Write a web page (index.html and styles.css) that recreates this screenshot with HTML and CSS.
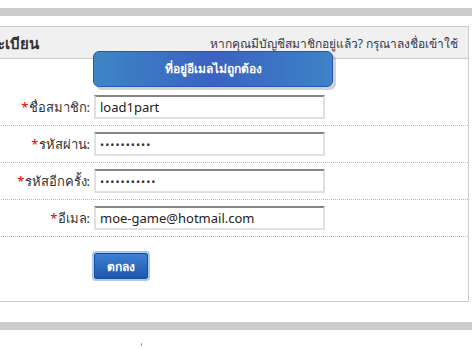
FILE: index.html
```html
<!doctype html>
<html lang="th">
<head>
<meta charset="UTF-8">
<title>ลงทะเบียน</title>
<link rel="stylesheet" href="styles.css">
</head>
<body>
<div class="topbar"></div>

<div class="panel">
  <div class="panel-head">
    <h2>ลงทะเบียน</h2>
    <a class="login-link" href="#">หากคุณมีบัญชีสมาชิกอยู่แล้ว? กรุณาลงชื่อเข้าใช้</a>
  </div>

  <div class="tip">ที่อยู่อีเมลไม่ถูกต้อง</div>

  <form class="reg">
    <div class="row first">
      <label for="user"><span class="req">*</span>ชื่อสมาชิก:</label>
      <input type="text" id="user" value="load1part">
    </div>
    <div class="row">
      <label for="pass"><span class="req">*</span>รหัสผ่าน:</label>
      <input type="password" id="pass" value="1234567890">
    </div>
    <div class="row">
      <label for="pass2"><span class="req">*</span>รหัสอีกครั้ง:</label>
      <input type="password" id="pass2" value="12345678901">
    </div>
    <div class="row">
      <label for="mail"><span class="req">*</span>อีเมล:</label>
      <input type="text" id="mail" value="moe-game@hotmail.com">
    </div>
    <div class="actions">
      <button type="submit">ตกลง</button>
    </div>
  </form>
</div>

<div class="bottombar"></div>
<div class="foot"><span class="mark"></span></div>
</body>
</html>
```

FILE: styles.css
```css
body {
    margin: 0;
    background: #fff;
    font-family: Tahoma, "Noto Sans", "DejaVu Sans", sans-serif;
    font-size: 13px;
    color: #333;
    overflow: hidden;
}
.topbar, .bottombar {
    height: 8px;
    background: #cccccc;
}
.topbar {
    margin-top: 8px;
}
.panel {
    position: relative;
    margin: 10px 3px 20px -40px;
    border: 1px solid #cccccc;
}
.panel-head {
    display: flex;
    justify-content: space-between;
    align-items: center;
    height: 32px;
    padding: 2px 10px 0 10px;
    box-sizing: border-box;
    background: #f0f0f0;
    border-bottom: 1px solid #cccccc;
}
.panel-head h2 {
    margin: 0;
    font-size: 15px;
    font-weight: bold;
    color: #333;
}
.login-link {
    color: #363a4c;
    text-decoration: none;
    font-size: 12px;
}
.tip {
    position: absolute;
    left: 132px;
    top: 24px;
    width: 238px;
    height: 34px;
    line-height: 34px;
    text-align: center;
    color: #fff;
    font-size: 12px;
    font-weight: bold;
    border: 1px solid #2558b4;
    border-radius: 6px;
    background: linear-gradient(to right, #3d86c6, #3b62c2 50%, #3d82c6);
    box-shadow: 3px 3px 0 rgba(0, 0, 0, 0.18);
}
.row {
    display: flex;
    align-items: center;
    gap: 4px;
    padding: 6px 0;
    border-bottom: 1px dotted #b8b8b8;
}
.row.first {
    padding-top: 36px;
}
.row label {
    width: 129px;
    text-align: right;
    color: #333;
}
.req {
    color: #e00000;
}
.row input {
    box-sizing: border-box;
    width: 231px;
    height: 24px;
    padding: 0 4px;
    border: 2px solid #e0e0e0;
    border-top-color: #858585;
    font-family: inherit;
    font-size: 13px;
    color: #222;
    outline: none;
}
.row input[type="password"] {
    font-size: 11px;
    letter-spacing: 1px;
    color: #333;
}
.actions {
    padding: 16px 0 22px 133px;
}
.actions button {
    width: 54px;
    height: 26px;
    border: 1px solid #1b4d9a;
    border-radius: 2px;
    background: linear-gradient(#3d7fd4, #1e58ad);
    box-shadow: 0 0 0 2px #a9c9ee;
    color: #fff;
    font-family: inherit;
    font-size: 12px;
    font-weight: bold;
    cursor: pointer;
}
.foot {
    padding: 13px 0 0 141px;
}
.mark {
    display: block;
    width: 1px;
    height: 3px;
    background: #a898c8;
}
```
